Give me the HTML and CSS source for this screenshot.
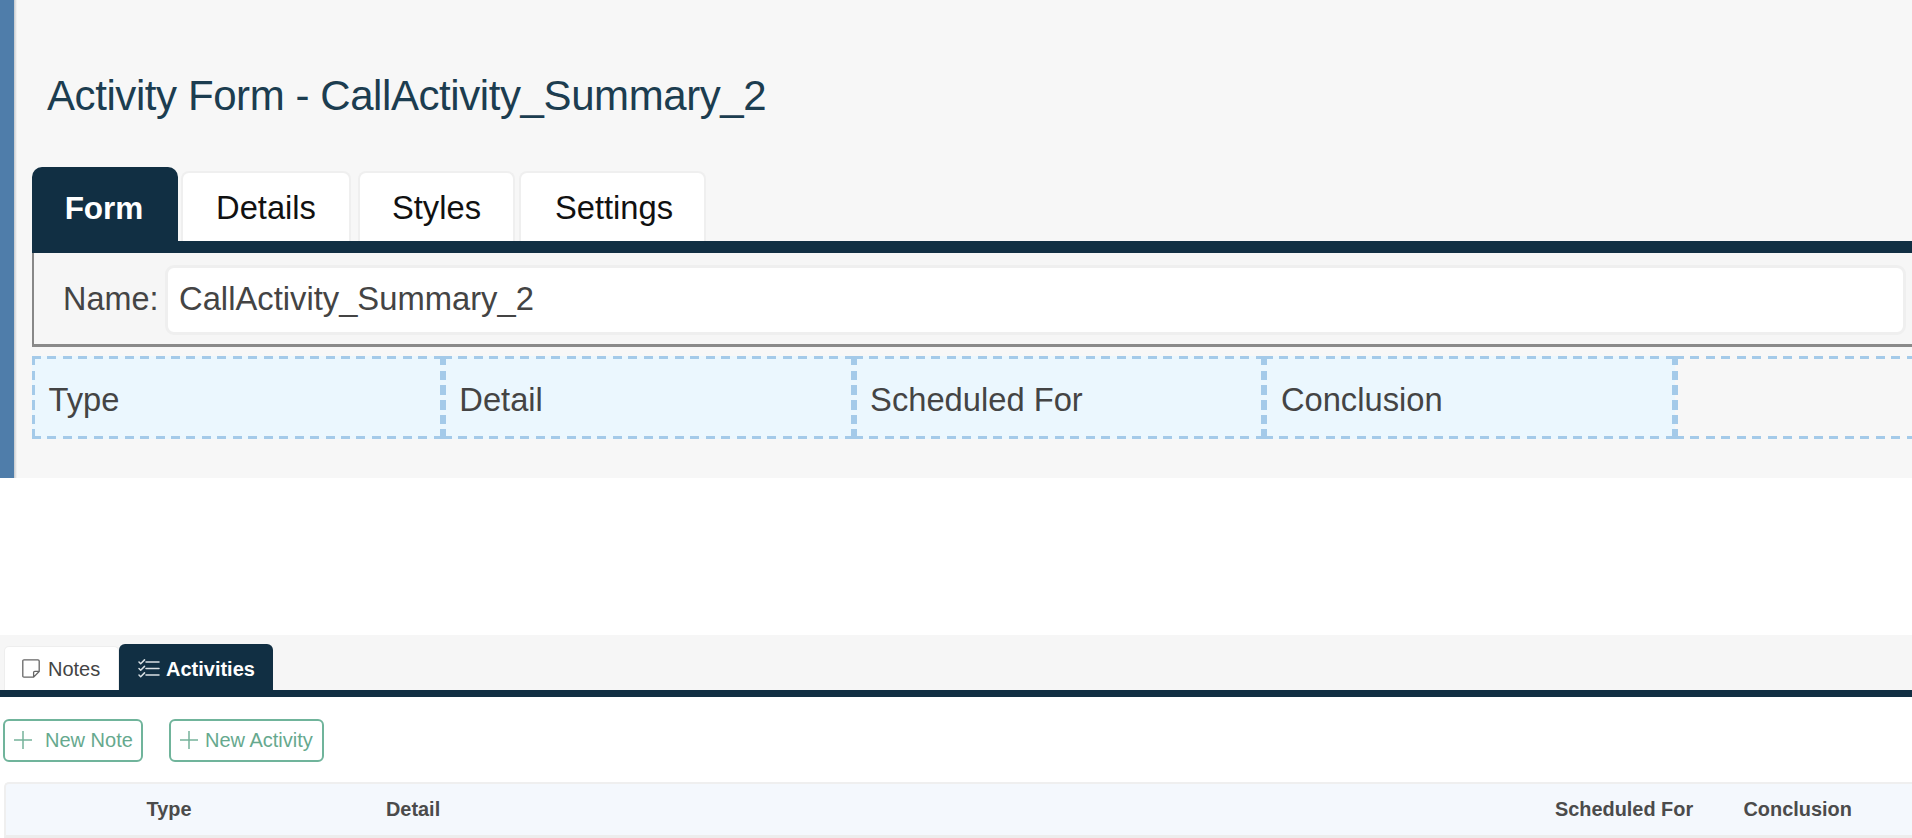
FILE: index.html
```html
<!DOCTYPE html>
<html lang="en">
<head>
<meta charset="utf-8">
<title>Activity Form</title>
<link rel="stylesheet" href="styles.css">
</head>
<body>
<section class="designer">
  <h1 class="title">Activity Form - CallActivity_Summary_2</h1>
  <nav class="tabs">
    <a class="tab tab-form">Form</a>
    <a class="tab tab-details">Details</a>
    <a class="tab tab-styles">Styles</a>
    <a class="tab tab-settings">Settings</a>
  </nav>
  <div class="panel">
    <label class="name-label">Name:</label>
    <div class="name-input">CallActivity_Summary_2</div>
  </div>
  <div class="cells">
    <div class="cell">Type</div>
    <div class="cell">Detail</div>
    <div class="cell">Scheduled For</div>
    <div class="cell">Conclusion</div>
    <div class="cell cell-empty"></div>
  </div>
</section>
<section class="record">
  <nav class="subtabs">
    <a class="subtab notes">
      <svg class="icon-note" viewBox="0 0 18 19" fill="none" stroke="#666" stroke-width="1.3"><path d="M2 .8h14q1.2 0 1.2 1.2v10.4l-5.6 5.8H2q-1.2 0-1.2-1.2V2Q.8.8 2 .8zM17.2 12.4h-4.4q-1.2 0-1.2 1.2v4.6"/></svg>
      <span>Notes</span>
    </a>
    <a class="subtab activities">
      <svg class="icon-list" viewBox="0 0 22 19" fill="none" stroke="#d9e0e4" stroke-width="1.5" stroke-linecap="round" stroke-linejoin="round"><path d="M8 3h13M8 9.5h13M8 16h13M1 3l1.7 1.7L6.5.9M1 9.5l1.7 1.7 3.8-3.8M1 16l1.7 1.7 3.8-3.8"/></svg>
      <span>Activities</span>
    </a>
  </nav>
  <div class="actions">
    <button class="btn new-note"><svg class="plus" viewBox="0 0 18 18"><path d="M9 0v18M0 9h18"/></svg><span>New Note</span></button>
    <button class="btn new-activity"><svg class="plus" viewBox="0 0 18 18"><path d="M9 0v18M0 9h18"/></svg><span>New Activity</span></button>
  </div>
  <div class="table-head">
    <span></span>
    <span>Type</span>
    <span>Detail</span>
    <span>Scheduled For</span>
    <span>Conclusion</span>
  </div>
</section>
</body>
</html>
```
FILE: styles.css
```css
* { box-sizing: border-box; }
body {
  margin: 0;
  width: 1912px;
  height: 838px;
  overflow: hidden;
  background: #fff;
  color: #444;
  font-family: "Liberation Sans", Arial, sans-serif;
}
.designer {
  height: 478px;
  padding: 68px 0 0 18px;
  background: linear-gradient(90deg, #c4c8cc, #f7f7f7 3px) #f7f7f7;
  border-left: 14px solid #4f7daa;
}
.title {
  margin: 0 0 0 15px;
  height: 99px;
  font-size: 42px;
  font-weight: 400;
  line-height: 56px;
  letter-spacing: -0.42px;
  color: #1c3d50;
  white-space: nowrap;
}
.tabs {
  display: flex;
  align-items: flex-end;
  height: 86px;
  border-bottom: 12px solid #112f43;
}
.tab {
  height: 70px;
  padding-top: 16px;
  font-size: 32.7px;
  line-height: 38px;
  text-align: center;
  color: #111;
  background: #fff;
  border: 2px solid #efefef;
  border-bottom: 0;
  border-radius: 8px 8px 0 0;
}
.tab-form {
  width: 146px;
  height: 74px;
  padding: 20px 2px 0 0;
  font-size: 31.5px;
  font-weight: 700;
  color: #fff;
  background: #112f43;
  border-color: #112f43;
  border-radius: 10px 10px 0 0;
}
.tab-details { width: 170px; margin-left: 3px; }
.tab-styles { width: 157px; margin-left: 7px; }
.tab-settings { width: 187px; margin-left: 4px; padding-left: 3px; }
.panel {
  display: flex;
  align-items: flex-start;
  height: 94px;
  padding: 12px 6px 0 29px;
  border-left: 2.5px solid #888;
  border-bottom: 3px solid #8a8a8a;
  background: #f6f6f6;
}
.name-label {
  width: 102px;
  padding-top: 15px;
  font-size: 32.4px;
  line-height: 38px;
}
.name-input {
  flex: 1;
  height: 70px;
  padding: 12px 0 0 11px;
  font-size: 32.75px;
  line-height: 38px;
  background: #fff;
  border: 3px solid #efefef;
  border-radius: 9px;
}
.cells { display: flex; margin-top: 9px; overflow: hidden; }
.cell {
  --dash: #a4cae9;
  --across: repeating-linear-gradient(90deg, var(--dash) 0 9px, transparent 9px 15.454px);
  --down: repeating-linear-gradient(180deg, var(--dash) 0 9.5px, transparent 9.5px 14.7px);
  flex: 0 0 410.8px;
  height: 83px;
  padding: 25px 0 0 16.5px;
  font-size: 32.7px;
  line-height: 38px;
  background:
    var(--across) top / 100% 3px no-repeat,
    var(--across) bottom / 100% 3px no-repeat,
    var(--down) left / 3px 100% no-repeat,
    var(--down) right / 3px 100% no-repeat,
    #ebf7fe;
}
.cell-empty { background-color: transparent; }
.record { margin-top: 157px; }
.subtabs {
  display: flex;
  align-items: flex-end;
  height: 62px;
  padding-left: 4px;
  background: #f6f6f6;
  border-bottom: 7.5px solid #112f43;
}
.subtab {
  display: flex;
  align-items: flex-start;
  font-size: 20px;
  line-height: 24px;
}
.notes {
  width: 115px;
  height: 44px;
  padding: 10px 0 0 16px;
  background: #fff;
  border: 1px solid #eee;
  border-bottom: 0;
  border-radius: 5px 5px 0 0;
}
.activities {
  width: 154px;
  height: 46px;
  padding: 13px 0 0 19px;
  color: #fff;
  font-weight: 700;
  background: #112f43;
  border-radius: 6px 6px 0 0;
}
.icon-note { width: 18px; height: 19px; margin: 2px 8px 0 1px; }
.icon-list { width: 22px; height: 19px; margin: 2px 6px 0 0; }
.actions { display: flex; gap: 26px; padding: 22px 0 0 3px; }
.btn {
  display: flex;
  align-items: center;
  height: 43px;
  padding: 0 0 2px 9px;
  font: 20px/24px "Liberation Sans", Arial, sans-serif;
  color: #66a98e;
  background: #fff;
  border: 2px solid #70b49b;
  border-radius: 6px;
  white-space: nowrap;
}
.new-note { width: 140px; gap: 13px; }
.new-activity { width: 155px; gap: 7px; }
.plus { width: 18px; height: 18px; flex: none; fill: none; stroke: #75b29b; stroke-width: 1.5; }
.table-head {
  display: grid;
  grid-template-columns: 141px 239.5px 1169px 188.5px 1fr;
  height: 56px;
  margin: 20px 0 0 3.5px;
  padding-top: 13px;
  font-size: 19.9px;
  font-weight: 700;
  line-height: 24px;
  color: #4b4b4b;
  background: #f4f8fd;
  border: 2px solid #efefef;
  border-right: 0;
  border-bottom: 3px solid #ededed;
  border-radius: 5px 0 0 0;
}
```
